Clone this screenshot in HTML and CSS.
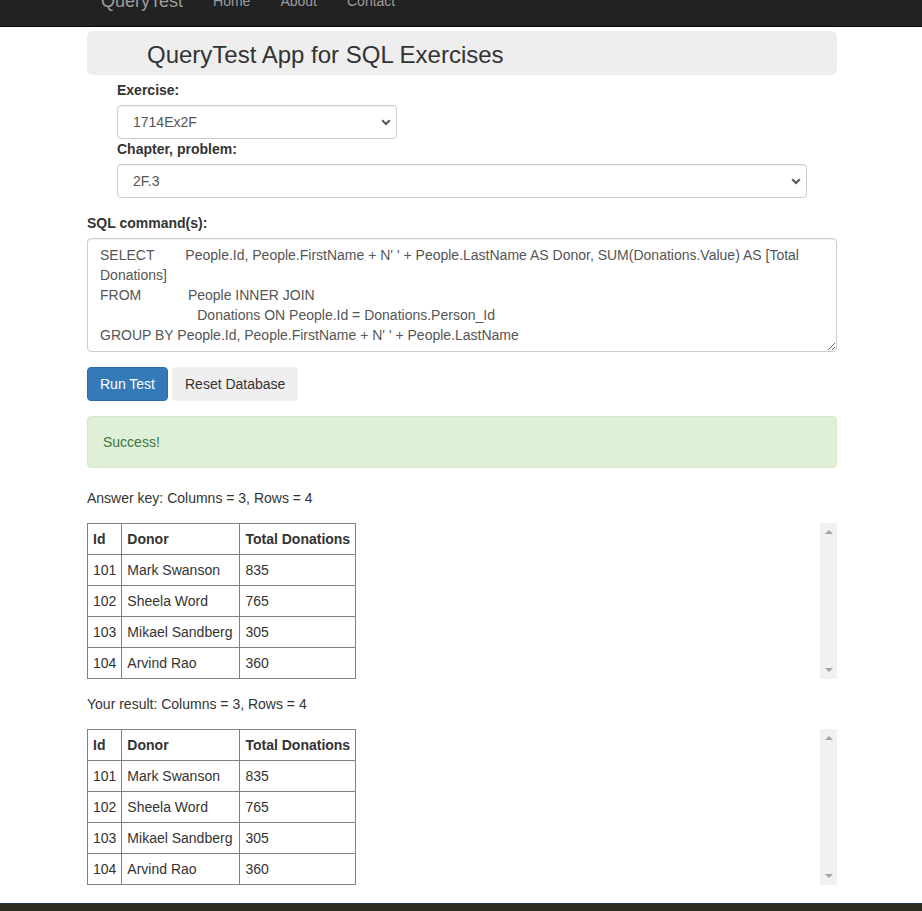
FILE: index.html
```html
<!DOCTYPE html>
<html lang="en">
<head>
<meta charset="utf-8">
<title>QueryTest App for SQL Exercises</title>
<link rel="stylesheet" href="styles.css">
</head>
<body>
<nav class="navbar">
  <div class="navbar-inner">
    <a class="brand" href="#">QueryTest</a>
    <ul class="nav">
      <li><a href="#">Home</a></li>
      <li><a href="#">About</a></li>
      <li><a href="#">Contact</a></li>
    </ul>
  </div>
</nav>

<div class="container">
  <div class="header">
    <h2 class="title">QueryTest App for SQL Exercises</h2>
  </div>

  <div class="picker">
    <label class="label">Exercise:</label>
    <div class="select-wrap select-short">
      <select class="select"><option>1714Ex2F</option></select>
      <svg class="chev" width="10" height="7" viewBox="0 0 10 7"><polyline points="1.2,1.2 5,5 8.8,1.2" fill="none" stroke="#555" stroke-width="2"/></svg>
    </div>
    <label class="label">Chapter, problem:</label>
    <div class="select-wrap">
      <select class="select"><option>2F.3</option></select>
      <svg class="chev" width="10" height="7" viewBox="0 0 10 7"><polyline points="1.2,1.2 5,5 8.8,1.2" fill="none" stroke="#555" stroke-width="2"/></svg>
    </div>
  </div>

  <label class="label">SQL command(s):</label>
  <textarea class="sql">SELECT        People.Id, People.FirstName + N' ' + People.LastName AS Donor, SUM(Donations.Value) AS [Total Donations]
FROM            People INNER JOIN
                         Donations ON People.Id = Donations.Person_Id
GROUP BY People.Id, People.FirstName + N' ' + People.LastName</textarea>

  <div class="buttons">
    <button class="btn btn-primary">Run Test</button>
    <button class="btn btn-default">Reset Database</button>
  </div>

  <div class="alert">Success!</div>

  <p class="caption">Answer key: Columns = 3, Rows = 4</p>
  <div class="result">
    <table class="grid">
      <tr><th>Id</th><th>Donor</th><th>Total Donations</th></tr>
      <tr><td>101</td><td>Mark Swanson</td><td>835</td></tr>
      <tr><td>102</td><td>Sheela Word</td><td>765</td></tr>
      <tr><td>103</td><td>Mikael Sandberg</td><td>305</td></tr>
      <tr><td>104</td><td>Arvind Rao</td><td>360</td></tr>
    </table>
    <div class="spacer"></div>
    <div class="scrollbar"><span class="arrow-up"></span><span class="arrow-down"></span></div>
  </div>

  <p class="caption">Your result: Columns = 3, Rows = 4</p>
  <div class="result">
    <table class="grid">
      <tr><th>Id</th><th>Donor</th><th>Total Donations</th></tr>
      <tr><td>101</td><td>Mark Swanson</td><td>835</td></tr>
      <tr><td>102</td><td>Sheela Word</td><td>765</td></tr>
      <tr><td>103</td><td>Mikael Sandberg</td><td>305</td></tr>
      <tr><td>104</td><td>Arvind Rao</td><td>360</td></tr>
    </table>
    <div class="spacer"></div>
    <div class="scrollbar"><span class="arrow-up"></span><span class="arrow-down"></span></div>
  </div>
</div>

<footer class="footer-bar"></footer>
</body>
</html>
```

FILE: styles.css
```css
* { box-sizing: border-box; }

html, body {
  margin: 0;
  padding: 0;
  height: 911px;
  overflow: hidden;
}

body {
  font-family: "Liberation Sans", Arial, sans-serif;
  font-size: 14px;
  line-height: 20px;
  color: #333;
  background: #fff;
}

.navbar {
  height: 27px;
  background: #222;
  border-bottom: 1px solid #080808;
  overflow: hidden;
}

.navbar-inner {
  width: 750px;
  margin: -24px auto 0;
  padding: 0 15px;
  height: 50px;
  display: flex;
}

.brand {
  display: block;
  padding: 15px 15px 15px 0;
  font-size: 18px;
  line-height: 20px;
  color: #9d9d9d;
  text-decoration: none;
}

.nav {
  display: flex;
  list-style: none;
  margin: 0;
  padding: 0;
}

.nav a {
  display: block;
  padding: 15px;
  line-height: 20px;
  color: #9d9d9d;
  text-decoration: none;
}

.container {
  width: 750px;
  margin-left: calc((100% - 750px) / 2 + 1px);
}

.header {
  margin-top: 4px;
  height: 44px;
  padding: 11px 60px 0;
  background: #eee;
  border-radius: 6px;
}

.title {
  margin: 0;
  font-size: 24px;
  font-weight: normal;
  line-height: 26px;
  color: #333;
}

.picker {
  margin-top: 5px;
  padding: 0 30px;
  margin-bottom: 15px;
}

.label {
  display: block;
  font-weight: bold;
  margin-bottom: 5px;
  line-height: 20px;
}

.select-wrap {
  position: relative;
}

.select-short {
  width: 280px;
}

.select {
  display: block;
  width: 100%;
  height: 34px;
  padding: 6px 24px 6px 15px;
  font-family: inherit;
  font-size: 14px;
  line-height: 20px;
  color: #555;
  background: #fff;
  border: 1px solid #ccc;
  border-radius: 4px;
  -webkit-appearance: none;
  appearance: none;
  box-shadow: inset 0 1px 1px rgba(0,0,0,.075);
}

.chev {
  position: absolute;
  right: 6px;
  top: 50%;
  margin-top: -3px;
  pointer-events: none;
}

.sql {
  display: block;
  width: 100%;
  height: 114px;
  padding: 6px 12px;
  font-family: inherit;
  font-size: 14px;
  line-height: 20px;
  color: #555;
  border: 1px solid #ccc;
  border-radius: 4px;
  box-shadow: inset 0 1px 1px rgba(0,0,0,.075);
  resize: both;
  margin: 0;
}

.buttons {
  margin-top: 15px;
  display: flex;
  gap: 4px;
}

.btn {
  height: 34px;
  padding: 6px 12px;
  font-family: inherit;
  font-size: 14px;
  line-height: 20px;
  border-radius: 4px;
  border: 1px solid transparent;
  cursor: pointer;
}

.btn-primary {
  color: #fff;
  background: #337ab7;
  border-color: #2e6da4;
}

.btn-default {
  color: #333;
  background: #efefef;
  border-color: #efefef;
}

.alert {
  margin-top: 15px;
  margin-bottom: 20px;
  padding: 15px;
  color: #3c763d;
  background: #dff0d8;
  border: 1px solid #d6e9c6;
  border-radius: 4px;
}

.caption {
  margin: 0 0 15px;
}

.result {
  display: flex;
  margin-bottom: 15px;
}

.result:last-child {
  margin-bottom: 0;
}

.grid {
  border-collapse: collapse;
}

.grid th, .grid td {
  border: 1px solid #808080;
  padding: 5px;
  line-height: 20px;
  text-align: left;
}

.grid th:nth-child(2), .grid td:nth-child(2) {
  padding-right: 7px;
}

.grid th {
  font-weight: bold;
}

.spacer {
  flex: 1;
}

.scrollbar {
  width: 17px;
  background: #f1f1f1;
  display: flex;
  flex-direction: column;
  justify-content: space-between;
  align-items: center;
  padding: 7px 0;
}

.arrow-up {
  width: 0;
  height: 0;
  border-left: 4px solid transparent;
  border-right: 4px solid transparent;
  border-bottom: 4px solid #a3a3a3;
}

.arrow-down {
  width: 0;
  height: 0;
  border-left: 4px solid transparent;
  border-right: 4px solid transparent;
  border-top: 4px solid #a3a3a3;
}

.footer-bar {
  margin-top: 18px;
  height: 8px;
  background: #2b2c20;
  border-top: 1px solid #1e3a4a;
}
```
